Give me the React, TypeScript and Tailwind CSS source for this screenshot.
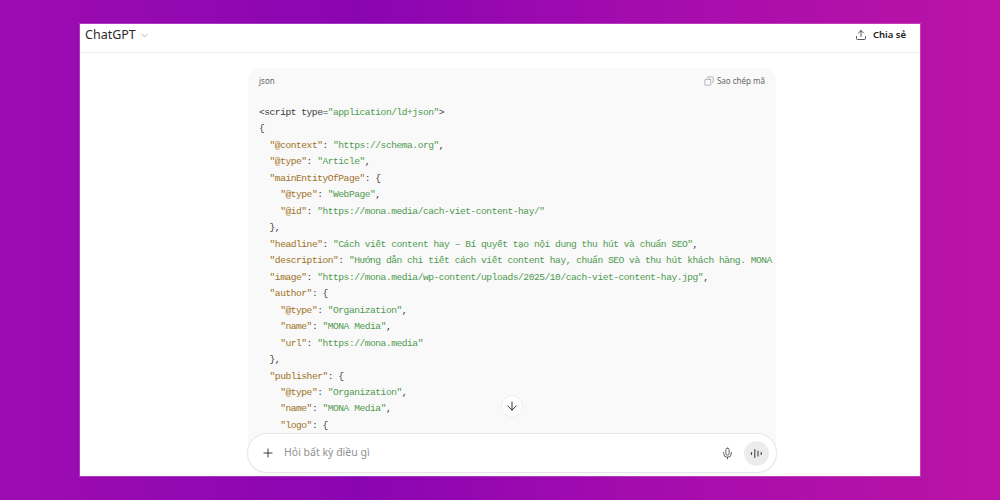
import { ArrowDown, ChevronDown, Copy, Mic, Plus, Upload } from "lucide-react";

type Tok = { t: string; c?: "k" | "s" };

const k = (t: string): Tok => ({ t, c: "k" });
const s = (t: string): Tok => ({ t, c: "s" });
const p = (t: string): Tok => ({ t });

// each line of the code block
const lines: Tok[][] = [
  [p("<script type="), s('"application/ld+json"'), p(">")],
  [p("{")],
  [p("  "), k('"@context"'), p(": "), s('"https://schema.org"'), p(",")],
  [p("  "), k('"@type"'), p(": "), s('"Article"'), p(",")],
  [p("  "), k('"mainEntityOfPage"'), p(": {")],
  [p("    "), k('"@type"'), p(": "), s('"WebPage"'), p(",")],
  [p("    "), k('"@id"'), p(": "), s('"https://mona.media/cach-viet-content-hay/"')],
  [p("  },")],
  [p("  "), k('"headline"'), p(": "), s('"Cách viết content hay – Bí quyết tạo nội dung thu hút và chuẩn SEO"'), p(",")],
  [p("  "), k('"description"'), p(": "), s('"Hướng dẫn chi tiết cách viết content hay, chuẩn SEO và thu hút khách hàng. MONA')],
  [p("  "), k('"image"'), p(": "), s('"https://mona.media/wp-content/uploads/2025/10/cach-viet-content-hay.jpg"'), p(",")],
  [p("  "), k('"author"'), p(": {")],
  [p("    "), k('"@type"'), p(": "), s('"Organization"'), p(",")],
  [p("    "), k('"name"'), p(": "), s('"MONA Media"'), p(",")],
  [p("    "), k('"url"'), p(": "), s('"https://mona.media"')],
  [p("  },")],
  [p("  "), k('"publisher"'), p(": {")],
  [p("    "), k('"@type"'), p(": "), s('"Organization"'), p(",")],
  [p("    "), k('"name"'), p(": "), s('"MONA Media"'), p(",")],
  [p("    "), k('"logo"'), p(": {")],
];

const App = () => {
  return (
    <div className="h-[500px] w-[1000px] overflow-hidden bg-[linear-gradient(90deg,#9d0cb0_0%,#8a05b2_36%,#a60cad_66%,#bb13a5_100%)] px-20 py-6 font-['Noto_Sans',sans-serif]">
      <div className="relative flex h-[452px] w-[840px] flex-col overflow-hidden bg-white ring-1 ring-white/20">
        <header className="flex h-[29px] flex-none items-center justify-between border-b border-[#f1f1f1] pb-[6px] pl-[5px] pr-[14px]">
          <div className="flex items-center gap-[3px] text-[12.5px] text-[#2b2b2b]">
            ChatGPT
            <ChevronDown size={11} strokeWidth={1.2} className="mt-[1px] text-[#777]" />
          </div>
          <div className="flex items-center gap-[6px] text-[9.5px] font-semibold text-[#222]">
            <Upload size={12} strokeWidth={1.5} />
            Chia sẻ
          </div>
        </header>

        <main className="flex-1 overflow-hidden pl-[168px] pt-[15px]">
          <div className="h-[385px] w-[528px] overflow-hidden rounded-t-[13px] bg-[#f9f9f9]">
            <div className="flex h-[26px] items-center justify-between px-[11px] text-[8px] text-[#666]">
              <span>json</span>
              <span className="flex items-center gap-[3px]">
                <Copy size={10} strokeWidth={1.1} className="-scale-x-100" />
                Sao chép mã
              </span>
            </div>
            <div className="overflow-hidden pl-[11px] pt-[11px] font-['Liberation_Mono',monospace] text-[9.6px] leading-[16.47px] tracking-[-0.47px] text-[#3b3b3b]">
              {lines.map((line, i) => (
                <div key={i} className="whitespace-pre">
                  {line.map((tok, j) => (
                    <span
                      key={j}
                      className={tok.c === "k" ? "text-[#a0701c]" : tok.c === "s" ? "text-[#4f9a50]" : ""}
                    >
                      {tok.t}
                    </span>
                  ))}
                </div>
              ))}
            </div>
          </div>
        </main>

        {/* scroll button + composer sit over the code */}
        <div className="absolute left-[421px] top-[371px] flex h-[22px] w-[22px] items-center justify-center rounded-full border border-[#eeeeee] bg-white text-[#222]">
          <ArrowDown size={14} strokeWidth={1.6} />
        </div>
        <div className="absolute left-[167px] top-[409px] flex h-[40px] w-[530px] items-center rounded-[20px] border border-[#e6e6e6] bg-white pl-[13px] pr-[7px] shadow-[0_1px_2px_rgba(0,0,0,0.04)]">
          <Plus size={14} strokeWidth={1.5} className="text-[#222]" />
          <span className="ml-[9px] flex-1 text-[10.5px] text-[#8f8f8f]">Hỏi bất kỳ điều gì</span>
          <Mic size={13} strokeWidth={1.4} className="mr-[10px] text-[#333]" />
          <div className="flex h-[25px] w-[25px] items-center justify-center rounded-full bg-[#ececec] text-[#444]">
            <svg width="13" height="13" viewBox="0 0 13 13" fill="none" stroke="currentColor" strokeWidth="1.1" strokeLinecap="round">
              <path d="M1.5 5.5v2" />
              <path d="M4.8 2.5v8" />
              <path d="M8 4v5" />
              <path d="M11.2 5.5v2" />
            </svg>
          </div>
        </div>
      </div>
    </div>
  );
};

export default App;
